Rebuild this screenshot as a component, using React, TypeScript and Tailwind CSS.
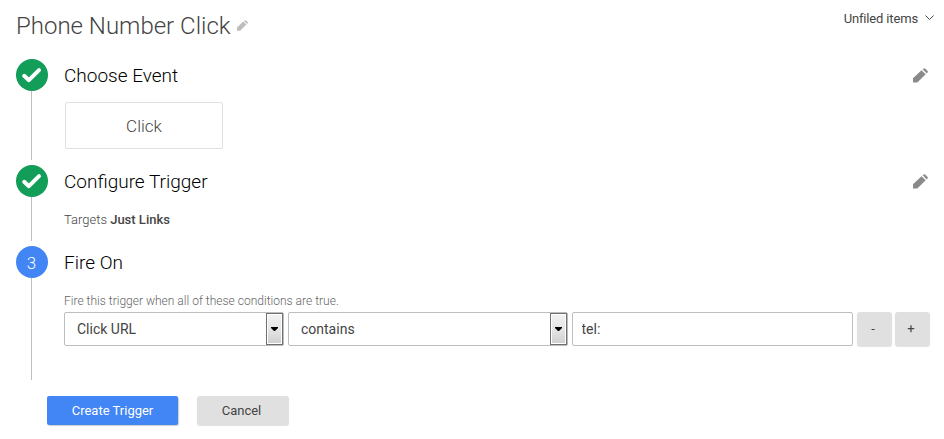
import { useState } from 'react'
import type { ReactNode } from 'react'

const selectClass = 'flex h-[34px] items-center justify-between rounded-[2px] border border-[#bdbdbd] bg-white pl-3 text-left'
const greyButtonClass = 'flex items-center justify-center rounded-[3px] bg-[#e0e0e0] text-[13px] text-[#444] shadow-[0_1px_1px_rgba(0,0,0,0.12)]'

function PencilIcon({ className }: { className: string }) {
  return (
    <svg viewBox="0 0 15 15" fill="currentColor" className={className}>
      <path d="M0 14.5v-4.2L8.5 2.2l4.2 4.1-8.4 8.2z" />
      <path d="M9.7 1.3l.7-.6q1-.8 2 0l2 2q.8 1 0 2l-.7.7z" />
    </svg>
  )
}

function DoneBadge() {
  return (
    <span className="flex size-8 shrink-0 items-center justify-center rounded-full bg-[#129d58]">
      <svg
        viewBox="0 0 32 32"
        fill="none"
        stroke="white"
        strokeWidth="4"
        strokeLinecap="round"
        strokeLinejoin="round"
        className="size-8"
      >
        <path d="M8.2 16.8l4.7 4.4L23 11.2" />
      </svg>
    </span>
  )
}

type StepProps = {
  title: string
  badge: ReactNode
  className: string
  editable?: boolean
  children: ReactNode
}

function Step({ title, badge, className, editable, children }: StepProps) {
  return (
    <section className={`flex ${className}`}>
      <div className="flex w-8 shrink-0 flex-col items-center">
        {badge}
        <div className="mr-px w-px grow bg-[#bfbfbf]" />
      </div>
      <div className="ml-4 grow">
        <div className="flex h-8 items-center justify-between">
          <h2 className="pt-[2px] text-[19px] leading-7 font-light text-black">{title}</h2>
          {editable && (
            <button type="button" aria-label={`Edit ${title}`} className="mr-[2px] text-[#8a8a8a]">
              <PencilIcon className="size-[15px]" />
            </button>
          )}
        </div>
        {children}
      </div>
    </section>
  )
}

function SelectBox({ value, className }: { value: string; className: string }) {
  return (
    <button type="button" className={`${selectClass} ${className}`}>
      <span>{value}</span>
      <span className="flex h-8 w-[17px] items-center justify-center border border-[#707070] bg-linear-to-b from-[#f2f2f2] via-[#e6e6e6] to-[#cfcfcf] ring-1 ring-white ring-inset">
        <svg viewBox="0 0 7 4" className="h-1 w-[7px]">
          <path d="M0 0h7v1L4 4H3L0 1z" />
        </svg>
      </span>
    </button>
  )
}

export default function App() {
  const [value, setValue] = useState('tel:')

  return (
    <main className="h-[439px] w-[944px] overflow-hidden bg-white pr-[14px] pl-4 font-['Roboto',sans-serif] text-[#444]">
      <header className="flex h-[59px] items-start justify-between">
        <div className="flex items-center gap-[6px] pt-[10px]">
          <h1 className="text-[24px] leading-8 font-light">Phone Number Click</h1>
          <PencilIcon className="mb-px size-[11px] text-[#bdbdbd]" />
        </div>
        <button type="button" className="-mr-1 flex items-center gap-[7px] pt-[9px] text-[13px] leading-5 tracking-[-0.15px]">
          Unfiled items
          <svg viewBox="0 0 9 5" fill="none" stroke="currentColor" className="mb-[3px] h-[5px] w-[9px]">
            <path d="M.5 .5l4 4 4-4" />
          </svg>
        </button>
      </header>

      <Step title="Choose Event" badge={<DoneBadge />} className="h-[101px]" editable>
        <div className="mt-[11px] ml-px flex h-[47px] w-[158px] items-center justify-center rounded-[2px] border border-[#e0e0e0] text-[17px] leading-6 font-light">
          Click
        </div>
      </Step>

      <Step title="Configure Trigger" badge={<DoneBadge />} className="mt-[5px] h-[76px]" editable>
        <p className="mt-[13px] text-[13px] leading-5 font-light">
          Targets <b className="font-medium">Just Links</b>
        </p>
      </Step>

      <Step
        title="Fire On"
        className="mt-[5px] h-[134px]"
        badge={
          <span className="flex size-8 shrink-0 items-center justify-center rounded-full bg-[#4285f4] pt-px pr-px text-[17px] leading-6 font-light text-white">
            3
          </span>
        }
      >
        <p className="mt-[15px] text-[12px] leading-4 font-light tracking-[0.01px] text-[#666]">
          Fire this trigger when all of these conditions are true.
        </p>
        <div className="mt-[3px] flex text-[14px]">
          <SelectBox value="Click URL" className="mr-1 w-[220px]" />
          <SelectBox value="contains" className="mr-1 w-[280px]" />
          <input
            value={value}
            onChange={(e) => setValue(e.target.value)}
            className="mr-1 h-[34px] w-[281px] rounded-[2px] border border-[#bdbdbd] px-[8.5px] outline-none"
          />
          <button type="button" className={`${greyButtonClass} mr-[3px] h-[34px] w-[35px] pr-[3px]`}>-</button>
          <button type="button" className={`${greyButtonClass} h-[34px] w-[35px] pr-[3px]`}>+</button>
        </div>
      </Step>

      <footer className="mt-4 ml-[31px] flex gap-[19px]">
        <button
          type="button"
          className="h-[29px] w-[131px] rounded-[2px] bg-[#4285f4] text-[13px] text-white shadow-[1px_1px_1px_rgba(0,0,0,0.2)]"
        >
          Create Trigger
        </button>
        <button type="button" className={`${greyButtonClass} h-[29px] w-[92px] pr-[3px]`}>Cancel</button>
      </footer>
    </main>
  )
}
